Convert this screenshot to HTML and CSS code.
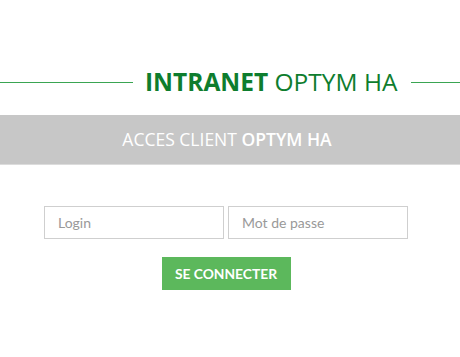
FILE: index.html
```html
<!DOCTYPE html>
<html lang="fr">
<head>
<meta charset="utf-8">
<title>Intranet Optym HA</title>
<link rel="stylesheet" href="styles.css">
</head>
<body>
<div class="page">
  <h1 class="title">
    <span class="line line-left"></span>
    <span class="title-text"><b>INTRANET</b> OPTYM HA</span>
    <span class="line line-right"></span>
  </h1>
  <div class="bar">ACCES CLIENT <b>OPTYM HA</b></div>
  <form class="login">
    <div class="fields">
      <input class="field" type="text" placeholder="Login">
      <input class="field" type="password" placeholder="Mot de passe">
    </div>
    <button class="btn" type="button">SE CONNECTER</button>
  </form>
</div>
</body>
</html>
```
FILE: styles.css
```css
html, body {
  margin: 0;
  padding: 0;
  background: #ffffff;
}
.page {
  width: 460px;
  height: 357px;
  font-family: "Open Sans", "Liberation Sans", sans-serif;
}
.title {
  margin: 0;
  height: 115px;
  display: flex;
  align-items: center;
  padding-top: 50px;
  padding-bottom: 1px;
  box-sizing: border-box;
  font-size: 24.5px;
  font-weight: 400;
  color: #0e7d2e;
}
.title b {
  font-weight: 700;
}
.line {
  display: block;
  height: 1px;
  background: #3aa552;
}
.line-left {
  width: 133px;
}
.line-right {
  flex: 1;
}
.title-text {
  padding: 0 14px 0 12px;
  white-space: nowrap;
  line-height: 30px;
}
.bar {
  height: 49px;
  background: #c7c7c7;
  color: #ffffff;
  font-size: 17.5px;
  line-height: 49px;
  text-align: center;
  padding-right: 6px;
  border-bottom: 1px solid #dcdcdc;
}
.bar b {
  font-weight: 600;
}
.login {
  padding-top: 41px;
  display: flex;
  flex-direction: column;
  align-items: center;
  padding-right: 8px;
}
.fields {
  display: flex;
  gap: 4px;
}
.field {
  width: 180px;
  height: 33px;
  box-sizing: border-box;
  border: 1px solid #cfcfcf;
  padding: 0 13px;
  font-family: "Lato", sans-serif;
  font-size: 14px;
  color: #555;
  background: #fff;
  outline: none;
}
.field::placeholder {
  color: #999999;
}
.btn {
  margin-top: 18px;
  width: 129px;
  height: 33px;
  border: none;
  background: #5cb85c;
  color: #ffffff;
  font-family: "Lato", sans-serif;
  font-weight: 700;
  font-size: 13.8px;
  padding: 0;
  cursor: pointer;
}
```
